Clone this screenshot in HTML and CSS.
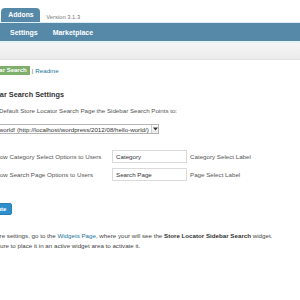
FILE: index.html
```html
<!DOCTYPE html>
<html lang="en">
<head>
  <meta charset="UTF-8">
  <title>Store Locator Plus - Addons</title>
  <link rel="stylesheet" href="styles.css">
</head>
<body>
  <div class="wrap">
    <div class="tabs">
      <a href="#" class="tab">General</a>
      <a href="#" class="tab active">Addons</a>
      <span class="version">Version 3.1.3</span>
    </div>
    <nav class="subnav">
      <a href="#">Settings</a>
      <a href="#">Marketplace</a>
    </nav>
    <div class="toolbar"></div>

    <div class="content">
      <div class="addon-links">
        <a href="#" class="pill">Sidebar Search</a>
        <span class="sep">|</span>
        <a href="#" class="link">Readme</a>
      </div>

      <h2>Sidebar Search Settings</h2>
      <p class="hint">Select Default Store Locator Search Page the Sidebar Search Points to:</p>

      <div class="select-box">
        <select>
          <option>Hello world! (http://localhost/wordpress/2012/08/hello-world/)</option>
        </select>
        <span class="arrow">
          <svg width="5" height="4" viewBox="0 0 5 4"><path d="M0 0.5h5L2.5 3.5z" fill="#333"/></svg>
        </span>
      </div>

      <div class="fields">
        <div class="field">
          <label>Allow Category Select Options to Users</label>
          <input type="text" value="Category">
          <span class="note">Category Select Label</span>
        </div>
        <div class="field">
          <label>Allow Search Page Options to Users</label>
          <input type="text" value="Search Page">
          <span class="note">Page Select Label</span>
        </div>
      </div>

      <button class="button">Update</button>

      <p class="help">For more settings, go to the <a href="#" class="link">Widgets Page</a>, where your will see the <strong>Store Locator Sidebar Search</strong> widget.<br>
      Make sure to place it in an active widget area to activate it.</p>
    </div>
  </div>
</body>
</html>
```

FILE: styles.css
```css
html, body {
  margin: 0;
  padding: 0;
  width: 300px;
  height: 300px;
  overflow: hidden;
  background: #fff;
}
body {
  font-family: "Liberation Sans", Arial, sans-serif;
  font-size: 6.2px;
  color: #444;
}
.wrap {
  margin-left: -20px;
  width: 340px;
}
.tabs {
  display: flex;
  align-items: flex-end;
  gap: 2px;
  height: 14px;
  padding-top: 8px;
  margin-left: -20px;
}
.tab {
  display: block;
  height: 14px;
  line-height: 14px;
  padding: 0 7px;
  border-radius: 4px 4px 0 0;
  background: #c3d3dc;
  color: #fff;
  font-size: 6.8px;
  font-weight: bold;
  text-decoration: none;
}
.tab.active {
  background: #5589a7;
  width: 25px;
}
.version {
  align-self: center;
  margin-left: 4px;
  margin-top: 3px;
  font-size: 5.8px;
  color: #777;
}
.subnav {
  display: flex;
  gap: 15px;
  height: 18px;
  padding-left: 30px;
  background: #5589a7;
  border-top: 1px solid #dbeef5;
  border-bottom: 2px solid #e5f3f8;
  align-items: center;
}
.subnav a {
  color: #fff;
  font-weight: bold;
  font-size: 7px;
  text-decoration: none;
}
.toolbar {
  height: 16px;
  background: linear-gradient(#f6f6f6, #ebebeb);
  border-bottom: 1px solid #e2e2e2;
}
.content {
  padding-top: 6px;
}
.addon-links {
  display: flex;
  align-items: center;
  gap: 2px;
  height: 9px;
}
.pill {
  display: block;
  height: 9px;
  line-height: 9px;
  padding: 0 3px;
  background: #7eaf6c;
  color: #fff;
  font-size: 6px;
  font-weight: bold;
  text-decoration: none;
}
.sep {
  color: #666;
}
.link {
  color: #21759b;
  text-decoration: none;
}
h2 {
  margin: 15px 0 0;
  font-size: 7.3px;
  line-height: 10px;
  color: #333;
}
.hint {
  margin: 6px 0 0;
  line-height: 9px;
  color: #555;
}
.select-box {
  display: flex;
  width: 179px;
  height: 10px;
  margin-top: 9px;
  border: 1px solid #b5b5b5;
  box-sizing: border-box;
  background: #fff;
}
.select-box select {
  flex: 1;
  appearance: none;
  -webkit-appearance: none;
  border: none;
  padding: 0 2px;
  margin: 0;
  height: 8px;
  font-family: inherit;
  font-size: 6.2px;
  color: #333;
  background: transparent;
}
.arrow {
  display: flex;
  align-items: center;
  justify-content: center;
  width: 7px;
  border-left: 1px solid #ccc;
  background: linear-gradient(#fff, #e8e8e8);
}
.fields {
  margin-top: 16px;
  display: flex;
  flex-direction: column;
  gap: 5px;
}
.field {
  display: grid;
  grid-template-columns: 116px 75px auto;
  column-gap: 3px;
  align-items: center;
  padding-left: 13px;
  height: 13px;
  color: #555;
}
.field input {
  box-sizing: border-box;
  width: 75px;
  height: 13px;
  margin: 0;
  padding: 0 3px;
  border: 1px solid #dadada;
  font-family: inherit;
  font-size: 6.2px;
  color: #333;
}
.button {
  display: block;
  margin-top: 22px;
  height: 12px;
  padding: 0 5px;
  border: 1px solid #2a7fb8;
  border-radius: 2px;
  background: #2f8fcd;
  color: #fff;
  font-family: inherit;
  font-size: 6px;
  font-weight: bold;
}
.help {
  margin: 16px 0 0;
  line-height: 9.5px;
  color: #444;
}
.help strong {
  color: #333;
}
```
